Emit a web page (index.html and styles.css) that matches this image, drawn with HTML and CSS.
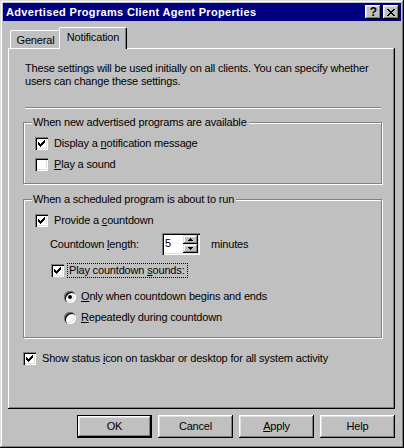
FILE: index.html
```html
<!DOCTYPE html>
<html>
<head>
<meta charset="utf-8">
<link rel="stylesheet" href="styles.css">
</head>
<body>
<div class="window">
  <div class="titlebar">
    <span class="title">Advertised Programs Client Agent Properties</span>
    <div class="tb-buttons">
      <span class="tbtn help">?</span>
      <span class="tbtn close"><svg width="8" height="7" viewBox="0 0 8 7"><path d="M0 0h2v1h-2z M6 0h2v1h-2z M1 1h2v1h-2z M5 1h2v1h-2z M2 2h4v1h-4z M3 3h2v1h-2z M2 4h4v1h-4z M1 5h2v1h-2z M5 5h2v1h-2z M0 6h2v1h-2z M6 6h2v1h-2z" fill="#000"/></svg></span>
    </div>
  </div>
  <div class="body">
    <div class="tabs">
      <div class="tab">General</div>
      <div class="tab active">Notification</div>
    </div>
    <div class="panel">
      <p class="desc">These settings will be used initially on all clients. You can specify whether<br>users can change these settings.</p>
      <div class="sep"></div>
      <fieldset class="group g1">
        <legend>When new advertised programs are available</legend>
        <div class="row"><span class="cb"><svg class="check" width="13" height="13" viewBox="0 0 13 13"><path d="M9 3h1v1h-1z M8 4h2v1h-2z M3 5h1v1h-1z M7 5h3v1h-3z M3 6h2v1h-2z M6 6h3v1h-3z M3 7h5v1h-5z M4 8h3v1h-3z M5 9h1v1h-1z" fill="#000"/></svg></span><span class="lbl">Display a <u>n</u>otification message</span></div>
        <div class="row r2"><span class="cb"></span><span class="lbl"><u>P</u>lay a sound</span></div>
      </fieldset>
      <fieldset class="group g2">
        <legend>When a scheduled program is about to run</legend>
        <div class="row"><span class="cb"><svg class="check" width="13" height="13" viewBox="0 0 13 13"><path d="M9 3h1v1h-1z M8 4h2v1h-2z M3 5h1v1h-1z M7 5h3v1h-3z M3 6h2v1h-2z M6 6h3v1h-3z M3 7h5v1h-5z M4 8h3v1h-3z M5 9h1v1h-1z" fill="#000"/></svg></span><span class="lbl">Provide a <u>c</u>ountdown</span></div>
        <div class="row length">
          <span class="len-label">Countdown <u>l</u>ength:</span>
          <div class="spin">
            <span class="spin-val">5</span>
            <div class="spin-btns">
              <span class="sbtn"><svg width="5" height="3" viewBox="0 0 5 3"><path d="M2 0h1v1h-1z M1 1h3v1h-3z M0 2h5v1h-5z" fill="#000"/></svg></span>
              <span class="sbtn"><svg width="5" height="3" viewBox="0 0 5 3"><path d="M0 0h5v1h-5z M1 1h3v1h-3z M2 2h1v1h-1z" fill="#000"/></svg></span>
            </div>
          </div>
          <span class="minutes">minutes</span>
        </div>
        <div class="row sounds"><span class="cb"><svg class="check" width="13" height="13" viewBox="0 0 13 13"><path d="M9 3h1v1h-1z M8 4h2v1h-2z M3 5h1v1h-1z M7 5h3v1h-3z M3 6h2v1h-2z M6 6h3v1h-3z M3 7h5v1h-5z M4 8h3v1h-3z M5 9h1v1h-1z" fill="#000"/></svg></span><span class="lbl focus">Play countdown <u>s</u>ounds:</span></div>
        <div class="row radio r-first"><span class="rb on"></span><span class="lbl"><u>O</u>nly when countdown begins and ends</span></div>
        <div class="row radio r-second"><span class="rb"></span><span class="lbl"><u>R</u>epeatedly during countdown</span></div>
      </fieldset>
      <div class="row status"><span class="cb"><svg class="check" width="13" height="13" viewBox="0 0 13 13"><path d="M9 3h1v1h-1z M8 4h2v1h-2z M3 5h1v1h-1z M7 5h3v1h-3z M3 6h2v1h-2z M6 6h3v1h-3z M3 7h5v1h-5z M4 8h3v1h-3z M5 9h1v1h-1z" fill="#000"/></svg></span><span class="lbl">Show status <u>i</u>con on taskbar or desktop for all system activity</span></div>
    </div>
    <div class="buttons">
      <span class="btn default">OK</span>
      <span class="btn">Cancel</span>
      <span class="btn"><u>A</u>pply</span>
      <span class="btn">Help</span>
    </div>
  </div>
</div>
</body>
</html>
```
FILE: styles.css
```css
html, body {
  margin: 0;
  padding: 0;
  background: #c0c0c0;
}
body {
  font-family: "Liberation Sans", Arial, sans-serif;
  font-size: 11px;
  line-height: 13px;
  letter-spacing: -0.17px;
  color: #000;
}
.window {
  width: 404px;
  height: 448px;
  box-sizing: border-box;
  padding: 3px;
  background: #c0c0c0;
  box-shadow: inset -1px -1px #000, inset 1px 1px #dfdfdf, inset -2px -2px #808080, inset 2px 2px #fff;
}
.titlebar {
  height: 18px;
  background: #000080;
  display: flex;
  align-items: center;
  justify-content: space-between;
  padding: 0 2px 0 3px;
}
.title {
  color: #fff;
  font-weight: bold;
  font-size: 11px;
  letter-spacing: 0.33px;
}
.tb-buttons {
  display: flex;
  gap: 2px;
}
.tbtn {
  width: 16px;
  height: 14px;
  box-sizing: border-box;
  background: #c0c0c0;
  box-shadow: inset -1px -1px #000, inset 1px 1px #fff, inset -2px -2px #808080, inset 2px 2px #dfdfdf;
  display: flex;
  align-items: center;
  justify-content: center;
}
.tbtn.help {
  font-weight: bold;
  font-size: 12px;
  line-height: 12px;
  letter-spacing: 0;
  padding-left: 1px;
}
.body {
  padding: 6px 6px 0 5px;
}
.tabs {
  height: 21px;
  display: flex;
  align-items: flex-end;
  padding-left: 2px;
}
.tab {
  position: relative;
  box-sizing: border-box;
  height: 18px;
  width: 51px;
  text-align: center;
  padding-top: 3px;
  border-top: 1px solid #fff;
  border-left: 1px solid #fff;
  border-right: 1px solid #000;
  border-radius: 2px 2px 0 0;
  box-shadow: inset -1px 0 #808080;
  background: #c0c0c0;
}
.tab.active {
  z-index: 2;
  height: 22px;
  width: 68px;
  margin-left: -2px;
  margin-bottom: -1px;
}
.panel {
  box-sizing: border-box;
  height: 361px;
  width: 387px;
  padding: 14px 13px 0 15px;
  box-shadow: inset -1px -1px #000, inset 1px 1px #fff, inset -2px -2px #808080;
}
.desc {
  margin: 0 0 0 2px;
}
.sep {
  margin: 19px 1px 0 2px;
  height: 0;
  border-top: 1px solid #808080;
  border-bottom: 1px solid #fff;
}
.group {
  margin: 0;
  padding: 0 11px;
  border: 1px solid #808080;
  box-shadow: inset 1px 1px #fff, 1px 1px #fff;
  min-width: 0;
}
.group legend {
  margin-left: -3px;
  padding: 0 2px 0 1px;
  background: #c0c0c0;
  line-height: 13px;
}
.g1 {
  margin-top: 7px;
  padding-top: 8px;
  padding-bottom: 12px;
}
.g2 {
  margin-top: 9px;
  padding-top: 8px;
  padding-bottom: 13px;
}
.row {
  display: flex;
  align-items: center;
  height: 13px;
}
.row.r2 {
  margin-top: 8px;
}
.cb {
  width: 13px;
  height: 13px;
  flex: none;
  background: #fff;
  box-shadow: inset 1px 1px #808080, inset 2px 2px #000, inset -1px -1px #fff, inset -2px -2px #dfdfdf;
}
.check {
  display: block;
}
.lbl {
  margin-left: 5px;
  padding: 0 1px;
  white-space: nowrap;
}
.row.length {
  height: 22px;
  margin-top: 6px;
}
.len-label {
  margin-left: 15px;
  width: 112px;
}
.spin {
  width: 38px;
  height: 22px;
  box-sizing: border-box;
  padding: 2px;
  background: #fff;
  box-shadow: inset 1px 1px #808080, inset 2px 2px #000, inset -1px -1px #fff, inset -2px -2px #dfdfdf;
  display: flex;
  justify-content: space-between;
}
.spin-val {
  padding-left: 1px;
  line-height: 17px;
}
.spin-btns {
  display: flex;
  flex-direction: column;
  width: 15px;
}
.sbtn {
  height: 9px;
  background: #c0c0c0;
  box-shadow: inset -1px -1px #000, inset 1px 1px #dfdfdf, inset -2px -2px #808080, inset 2px 2px #fff;
  display: flex;
  align-items: center;
  justify-content: center;
}
.sbtn svg {
  display: block;
}
.minutes {
  margin-left: 11px;
}
.row.sounds {
  margin-top: 9px;
  margin-left: 16px;
}
.focus {
  outline: 1px dotted #000;
  margin-left: 4px;
  padding: 0 2px 0 1px;
}
.row.radio {
  margin-left: 29px;
}
.r-first {
  margin-top: 13px;
}
.r-second {
  margin-top: 8px;
}
.rb {
  width: 12px;
  height: 12px;
  flex: none;
  border-radius: 50%;
  background: #fff;
  box-shadow: inset 1px 1px #808080, inset 2px 2px #000, inset -1px -1px #fff, inset -2px -2px #dfdfdf;
  display: flex;
  align-items: center;
  justify-content: center;
}
.rb.on::after {
  content: "";
  width: 4px;
  height: 4px;
  border-radius: 50%;
  background: #000;
}
.radio .lbl {
  margin-left: 4px;
}
.row.status {
  margin-top: 14px;
}
.buttons {
  display: flex;
  justify-content: flex-end;
  gap: 6px;
  margin-top: 6px;
  padding-right: 0;
}
.btn {
  width: 75px;
  height: 23px;
  box-sizing: border-box;
  background: #c0c0c0;
  box-shadow: inset -1px -1px #000, inset 1px 1px #fff, inset -2px -2px #808080, inset 2px 2px #dfdfdf;
  display: flex;
  align-items: center;
  justify-content: center;
}
.btn.default {
  box-shadow: inset 0 0 0 1px #000, inset -2px -2px #000, inset 2px 2px #fff, inset -3px -3px #808080, inset 3px 3px #dfdfdf;
}
```
